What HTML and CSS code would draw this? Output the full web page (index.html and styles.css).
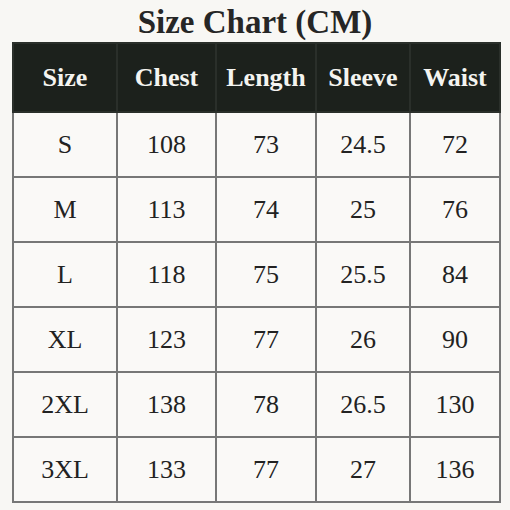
FILE: index.html
```html
<!DOCTYPE html>
<html>
<head>
<meta charset="utf-8">
<link rel="stylesheet" href="styles.css">
</head>
<body>
<div class="page">
  <h1 class="title">Size Chart (CM)</h1>
  <table class="chart">
    <colgroup>
      <col class="c1"><col class="c2"><col class="c3"><col class="c4"><col class="c5">
    </colgroup>
    <thead>
      <tr><th>Size</th><th>Chest</th><th>Length</th><th>Sleeve</th><th>Waist</th></tr>
    </thead>
    <tbody>
      <tr><td>S</td><td>108</td><td>73</td><td>24.5</td><td>72</td></tr>
      <tr><td>M</td><td>113</td><td>74</td><td>25</td><td>76</td></tr>
      <tr><td>L</td><td>118</td><td>75</td><td>25.5</td><td>84</td></tr>
      <tr><td>XL</td><td>123</td><td>77</td><td>26</td><td>90</td></tr>
      <tr><td>2XL</td><td>138</td><td>78</td><td>26.5</td><td>130</td></tr>
      <tr><td>3XL</td><td>133</td><td>77</td><td>27</td><td>136</td></tr>
    </tbody>
  </table>
</div>
</body>
</html>
```
FILE: styles.css
```css
html, body {
  margin: 0;
  padding: 0;
  background: #f8f7f4;
}
.page {
  width: 510px;
  height: 510px;
  font-family: "Liberation Serif", "Times New Roman", serif;
  color: #222;
}
.title {
  margin: 0;
  padding-top: 4px;
  height: 38px;
  font-size: 33px;
  font-weight: bold;
  line-height: 36px;
  text-align: center;
  color: #262626;
}
.chart {
  margin-left: 12px;
  border-collapse: collapse;
  table-layout: fixed;
  width: 487px;
}
.c1 { width: 104px; }
.c2 { width: 99px; }
.c3 { width: 100px; }
.c4 { width: 94px; }
.c5 { width: 90px; }
.chart th {
  background: #1c211c;
  color: #f4f4f0;
  font-size: 26px;
  font-weight: bold;
  height: 67px;
  padding: 0;
  border: 2px solid #2a2f2a;
}
.chart td {
  height: 63px;
  padding: 0;
  text-align: center;
  font-size: 26px;
  border: 2px solid #777;
  background: #faf9f7;
}
```
